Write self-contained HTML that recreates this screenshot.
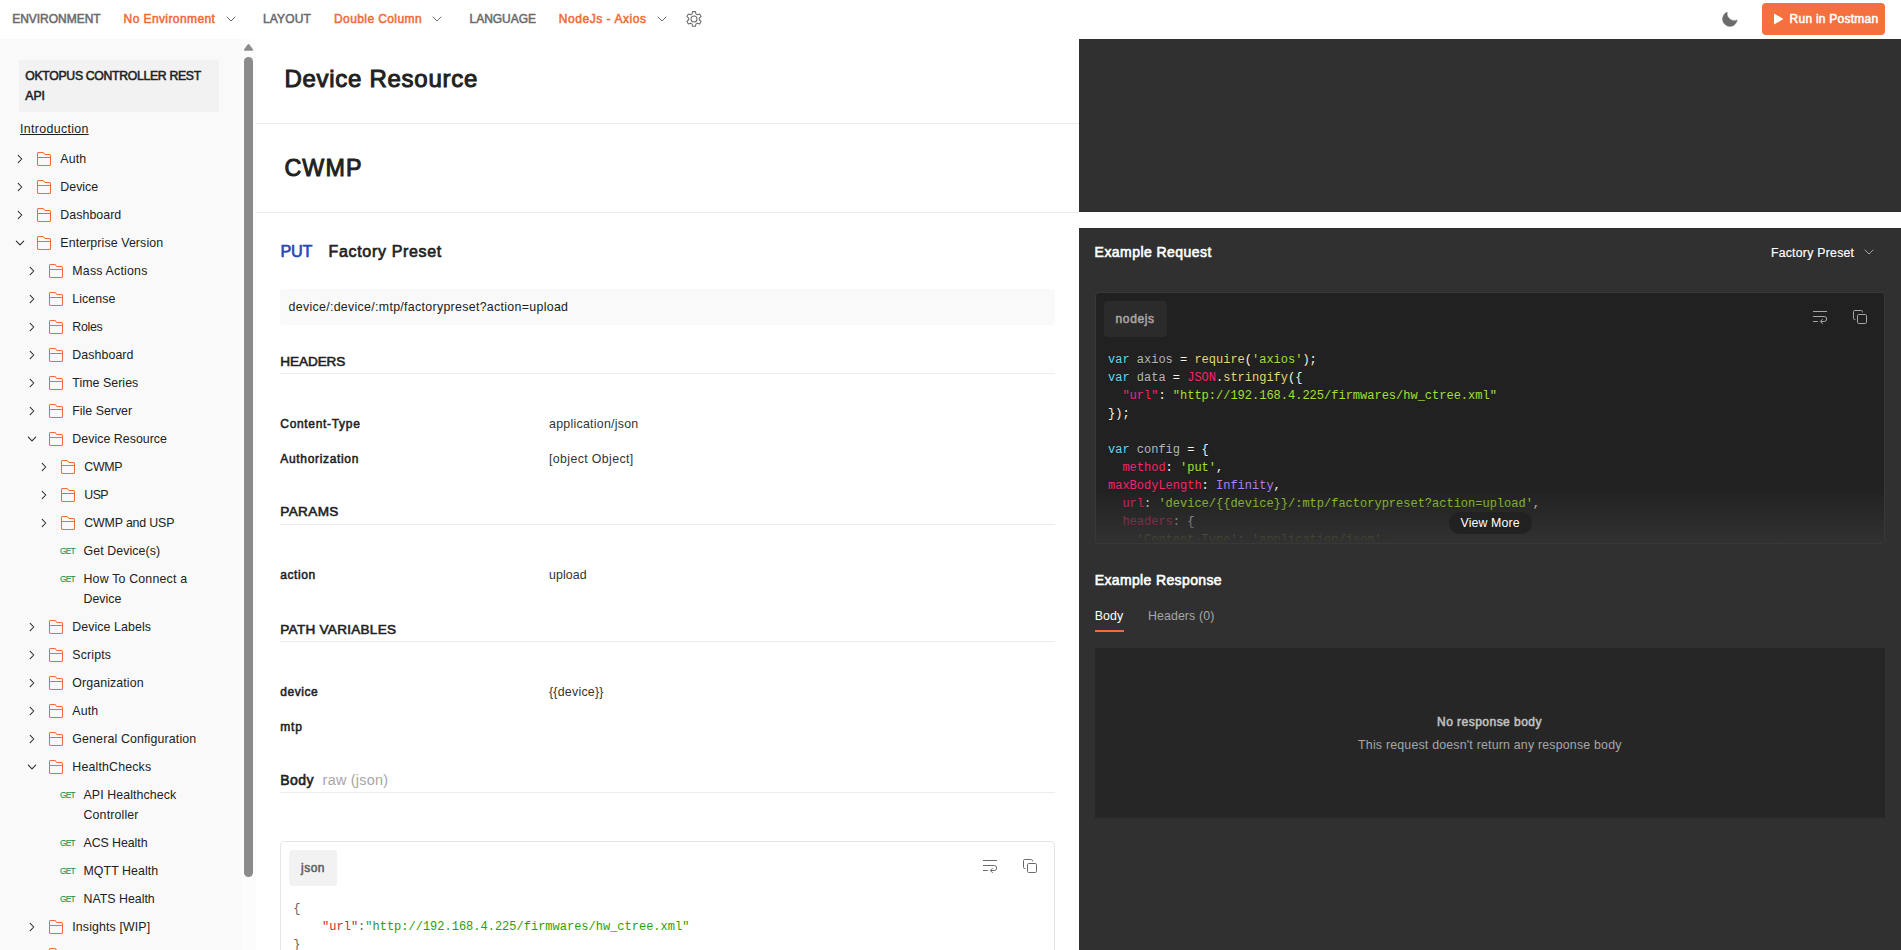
<!DOCTYPE html>
<html lang="en">
<head>
<meta charset="utf-8">
<title>Oktopus Controller REST API</title>
<style>
*{margin:0;padding:0;box-sizing:content-box}
html,body{width:1901px;height:950px;overflow:hidden;background:#fff}
body{position:relative;font-family:"Liberation Sans", Arial, sans-serif;font-size:12px;color:#212121}
.a,.t,.sec{position:absolute}
.t{white-space:pre;font-weight:400}
.b{font-weight:700}
.m{font-family:"Liberation Mono", "Courier New", monospace;font-size:12px}
.cs{text-shadow:0 1px rgba(0,0,0,.3)}
svg{display:block;overflow:visible}
</style>
</head>
<body>
<header class="sec top" style="left:0;top:0;width:1901px;height:39px;background:#fff;">
<span class="t" style="left:12.20px;top:10.00px;font-size:12.0px;line-height:18px;letter-spacing:-0.025px;color:#6b6b6b;-webkit-text-stroke:0.52px;">ENVIRONMENT</span>
<span class="t" style="left:123.60px;top:10.00px;font-size:12.0px;line-height:18px;letter-spacing:0.404px;color:#f26b3a;-webkit-text-stroke:0.52px;">No Environment</span>
<span class="t" style="left:263.00px;top:10.00px;font-size:12.0px;line-height:18px;letter-spacing:0.146px;color:#6b6b6b;-webkit-text-stroke:0.52px;">LAYOUT</span>
<span class="t" style="left:334.00px;top:10.00px;font-size:12.0px;line-height:18px;letter-spacing:0.406px;color:#f26b3a;-webkit-text-stroke:0.52px;">Double Column</span>
<span class="t" style="left:469.50px;top:10.00px;font-size:12.0px;line-height:18px;letter-spacing:-0.023px;color:#6b6b6b;-webkit-text-stroke:0.52px;">LANGUAGE</span>
<span class="t" style="left:558.75px;top:10.00px;font-size:12.0px;line-height:18px;letter-spacing:0.550px;color:#f26b3a;-webkit-text-stroke:0.52px;">NodeJs - Axios</span>
<svg class="a" style="left:223px;top:11px;" width="16" height="16" viewBox="0 0 16 16" fill="none"><path d="M4 6 L8 10 L12 6" stroke="#6b6b6b" stroke-width="1.0" stroke-linecap="round" stroke-linejoin="round"/></svg>
<svg class="a" style="left:429px;top:11px;" width="16" height="16" viewBox="0 0 16 16" fill="none"><path d="M4 6 L8 10 L12 6" stroke="#6b6b6b" stroke-width="1.0" stroke-linecap="round" stroke-linejoin="round"/></svg>
<svg class="a" style="left:654px;top:11px;" width="16" height="16" viewBox="0 0 16 16" fill="none"><path d="M4 6 L8 10 L12 6" stroke="#6b6b6b" stroke-width="1.0" stroke-linecap="round" stroke-linejoin="round"/></svg>
<svg class="a" style="left:686px;top:11px;" width="16" height="16" viewBox="0 0 16 16" fill="none"><path d="M6.05 2.97L6.50 0.60L9.50 0.60L9.95 2.97A5.35 5.35 0 0 1 11.34 3.77L13.61 2.98L15.11 5.57L13.29 7.15A5.35 5.35 0 0 1 13.29 8.75L15.11 10.33L13.61 12.92L11.34 12.13A5.35 5.35 0 0 1 9.95 12.93L9.50 15.30L6.50 15.30L6.05 12.93A5.35 5.35 0 0 1 4.66 12.13L2.39 12.92L0.89 10.33L2.71 8.75A5.35 5.35 0 0 1 2.71 7.15L0.89 5.57L2.39 2.98L4.66 3.77A5.35 5.35 0 0 1 6.05 2.97Z" stroke="#6b6b6b" stroke-width="1.05" stroke-linejoin="round"/><circle cx="8" cy="7.95" r="3" stroke="#6b6b6b" stroke-width="1.05"/></svg>
<svg class="a" style="left:1721px;top:11px;" width="17" height="16" viewBox="0 0 17 16" fill="none"><path d="M6.2 1.1 A7.4 7.4 0 1 0 16.25 8.9 A7.15 7.15 0 0 1 6.2 1.1Z" fill="#6b6b6b" stroke="#6b6b6b" stroke-width="0.4" stroke-linejoin="round"/></svg>
<div class="a" style="left:1762px;top:3px;width:123px;height:32px;background:#f4703f;border-radius:4px;"></div>
<svg class="a" style="left:1773px;top:13px;" width="11" height="12" viewBox="0 0 11 12" fill="none"><path d="M1 0.4 L10.4 6 L1 11.6Z" fill="#fff"/></svg>
<span class="t" style="left:1789.60px;top:10.00px;font-size:12.0px;line-height:18px;letter-spacing:0.244px;color:#fff;-webkit-text-stroke:0.52px;">Run in Postman</span>
</header>
<nav class="sec side" style="left:0;top:39px;width:241px;height:911px;background:#f9f9f9;overflow:hidden;">
<div class="a" style="left:19px;top:21px;width:200px;height:52px;background:#f2f2f2;"></div>
<span class="t" style="left:25.30px;top:28.00px;font-size:12.24px;line-height:18px;letter-spacing:-0.307px;color:#212121;-webkit-text-stroke:0.53px;">OKTOPUS CONTROLLER REST</span>
<span class="t" style="left:25.30px;top:48.00px;font-size:12.24px;line-height:18px;letter-spacing:-0.078px;color:#212121;-webkit-text-stroke:0.53px;">API</span>
<span class="t" style="left:20.10px;top:81.00px;font-size:12.36px;line-height:18px;letter-spacing:0.334px;color:#212121;text-decoration:underline;text-underline-offset:0.5px;">Introduction</span>
<svg class="a" style="left:12.2px;top:112px;" width="16" height="16" viewBox="0 0 16 16" fill="none"><path d="M6.2 4.4 L9.8 8 L6.2 11.6" stroke="#2b2b2b" stroke-width="1.05" stroke-linecap="round" stroke-linejoin="round"/></svg>
<svg class="a" style="left:36px;top:112px;" width="16" height="16" viewBox="0 0 16 16" fill="none"><path d="M2.5 1.5H7L9 3.5H13.5a1 1 0 0 1 1 1V13.5a1 1 0 0 1-1 1H2.5a1 1 0 0 1-1-1V2.5a1 1 0 0 1 1-1ZM1.5 6.5H14.5" stroke="#f26b3a" stroke-width="1.02" stroke-linejoin="round"/></svg>
<span class="t" style="left:60.30px;top:111.00px;font-size:12.36px;line-height:18px;letter-spacing:0.116px;color:#212121;">Auth</span>
<svg class="a" style="left:12.2px;top:140px;" width="16" height="16" viewBox="0 0 16 16" fill="none"><path d="M6.2 4.4 L9.8 8 L6.2 11.6" stroke="#2b2b2b" stroke-width="1.05" stroke-linecap="round" stroke-linejoin="round"/></svg>
<svg class="a" style="left:36px;top:140px;" width="16" height="16" viewBox="0 0 16 16" fill="none"><path d="M2.5 1.5H7L9 3.5H13.5a1 1 0 0 1 1 1V13.5a1 1 0 0 1-1 1H2.5a1 1 0 0 1-1-1V2.5a1 1 0 0 1 1-1ZM1.5 6.5H14.5" stroke="#f26b3a" stroke-width="1.02" stroke-linejoin="round"/></svg>
<span class="t" style="left:60.30px;top:139.00px;font-size:12.36px;line-height:18px;letter-spacing:0.020px;color:#212121;">Device</span>
<svg class="a" style="left:12.2px;top:168px;" width="16" height="16" viewBox="0 0 16 16" fill="none"><path d="M6.2 4.4 L9.8 8 L6.2 11.6" stroke="#2b2b2b" stroke-width="1.05" stroke-linecap="round" stroke-linejoin="round"/></svg>
<svg class="a" style="left:36px;top:168px;" width="16" height="16" viewBox="0 0 16 16" fill="none"><path d="M2.5 1.5H7L9 3.5H13.5a1 1 0 0 1 1 1V13.5a1 1 0 0 1-1 1H2.5a1 1 0 0 1-1-1V2.5a1 1 0 0 1 1-1ZM1.5 6.5H14.5" stroke="#f26b3a" stroke-width="1.02" stroke-linejoin="round"/></svg>
<span class="t" style="left:60.30px;top:167.00px;font-size:12.36px;line-height:18px;letter-spacing:0.059px;color:#212121;">Dashboard</span>
<svg class="a" style="left:12px;top:196px;" width="16" height="16" viewBox="0 0 16 16" fill="none"><path d="M4.3 6.1 L8 9.9 L11.7 6.1" stroke="#2b2b2b" stroke-width="1.05" stroke-linecap="round" stroke-linejoin="round"/></svg>
<svg class="a" style="left:36px;top:196px;" width="16" height="16" viewBox="0 0 16 16" fill="none"><path d="M2.5 1.5H7L9 3.5H13.5a1 1 0 0 1 1 1V13.5a1 1 0 0 1-1 1H2.5a1 1 0 0 1-1-1V2.5a1 1 0 0 1 1-1ZM1.5 6.5H14.5" stroke="#f26b3a" stroke-width="1.02" stroke-linejoin="round"/></svg>
<span class="t" style="left:60.30px;top:195.00px;font-size:12.36px;line-height:18px;letter-spacing:0.106px;color:#212121;">Enterprise Version</span>
<svg class="a" style="left:24.200000000000003px;top:224px;" width="16" height="16" viewBox="0 0 16 16" fill="none"><path d="M6.2 4.4 L9.8 8 L6.2 11.6" stroke="#2b2b2b" stroke-width="1.05" stroke-linecap="round" stroke-linejoin="round"/></svg>
<svg class="a" style="left:48px;top:224px;" width="16" height="16" viewBox="0 0 16 16" fill="none"><path d="M2.5 1.5H7L9 3.5H13.5a1 1 0 0 1 1 1V13.5a1 1 0 0 1-1 1H2.5a1 1 0 0 1-1-1V2.5a1 1 0 0 1 1-1ZM1.5 6.5H14.5" stroke="#f26b3a" stroke-width="1.02" stroke-linejoin="round"/></svg>
<span class="t" style="left:72.30px;top:223.00px;font-size:12.36px;line-height:18px;letter-spacing:0.207px;color:#212121;">Mass Actions</span>
<svg class="a" style="left:24.200000000000003px;top:252px;" width="16" height="16" viewBox="0 0 16 16" fill="none"><path d="M6.2 4.4 L9.8 8 L6.2 11.6" stroke="#2b2b2b" stroke-width="1.05" stroke-linecap="round" stroke-linejoin="round"/></svg>
<svg class="a" style="left:48px;top:252px;" width="16" height="16" viewBox="0 0 16 16" fill="none"><path d="M2.5 1.5H7L9 3.5H13.5a1 1 0 0 1 1 1V13.5a1 1 0 0 1-1 1H2.5a1 1 0 0 1-1-1V2.5a1 1 0 0 1 1-1ZM1.5 6.5H14.5" stroke="#f26b3a" stroke-width="1.02" stroke-linejoin="round"/></svg>
<span class="t" style="left:72.30px;top:251.00px;font-size:12.36px;line-height:18px;letter-spacing:0.070px;color:#212121;">License</span>
<svg class="a" style="left:24.200000000000003px;top:280px;" width="16" height="16" viewBox="0 0 16 16" fill="none"><path d="M6.2 4.4 L9.8 8 L6.2 11.6" stroke="#2b2b2b" stroke-width="1.05" stroke-linecap="round" stroke-linejoin="round"/></svg>
<svg class="a" style="left:48px;top:280px;" width="16" height="16" viewBox="0 0 16 16" fill="none"><path d="M2.5 1.5H7L9 3.5H13.5a1 1 0 0 1 1 1V13.5a1 1 0 0 1-1 1H2.5a1 1 0 0 1-1-1V2.5a1 1 0 0 1 1-1ZM1.5 6.5H14.5" stroke="#f26b3a" stroke-width="1.02" stroke-linejoin="round"/></svg>
<span class="t" style="left:72.30px;top:279.00px;font-size:12.36px;line-height:18px;letter-spacing:-0.302px;color:#212121;">Roles</span>
<svg class="a" style="left:24.200000000000003px;top:308px;" width="16" height="16" viewBox="0 0 16 16" fill="none"><path d="M6.2 4.4 L9.8 8 L6.2 11.6" stroke="#2b2b2b" stroke-width="1.05" stroke-linecap="round" stroke-linejoin="round"/></svg>
<svg class="a" style="left:48px;top:308px;" width="16" height="16" viewBox="0 0 16 16" fill="none"><path d="M2.5 1.5H7L9 3.5H13.5a1 1 0 0 1 1 1V13.5a1 1 0 0 1-1 1H2.5a1 1 0 0 1-1-1V2.5a1 1 0 0 1 1-1ZM1.5 6.5H14.5" stroke="#f26b3a" stroke-width="1.02" stroke-linejoin="round"/></svg>
<span class="t" style="left:72.30px;top:307.00px;font-size:12.36px;line-height:18px;letter-spacing:0.081px;color:#212121;">Dashboard</span>
<svg class="a" style="left:24.200000000000003px;top:336px;" width="16" height="16" viewBox="0 0 16 16" fill="none"><path d="M6.2 4.4 L9.8 8 L6.2 11.6" stroke="#2b2b2b" stroke-width="1.05" stroke-linecap="round" stroke-linejoin="round"/></svg>
<svg class="a" style="left:48px;top:336px;" width="16" height="16" viewBox="0 0 16 16" fill="none"><path d="M2.5 1.5H7L9 3.5H13.5a1 1 0 0 1 1 1V13.5a1 1 0 0 1-1 1H2.5a1 1 0 0 1-1-1V2.5a1 1 0 0 1 1-1ZM1.5 6.5H14.5" stroke="#f26b3a" stroke-width="1.02" stroke-linejoin="round"/></svg>
<span class="t" style="left:72.30px;top:335.00px;font-size:12.36px;line-height:18px;letter-spacing:0.047px;color:#212121;">Time Series</span>
<svg class="a" style="left:24.200000000000003px;top:364px;" width="16" height="16" viewBox="0 0 16 16" fill="none"><path d="M6.2 4.4 L9.8 8 L6.2 11.6" stroke="#2b2b2b" stroke-width="1.05" stroke-linecap="round" stroke-linejoin="round"/></svg>
<svg class="a" style="left:48px;top:364px;" width="16" height="16" viewBox="0 0 16 16" fill="none"><path d="M2.5 1.5H7L9 3.5H13.5a1 1 0 0 1 1 1V13.5a1 1 0 0 1-1 1H2.5a1 1 0 0 1-1-1V2.5a1 1 0 0 1 1-1ZM1.5 6.5H14.5" stroke="#f26b3a" stroke-width="1.02" stroke-linejoin="round"/></svg>
<span class="t" style="left:72.30px;top:363.00px;font-size:12.36px;line-height:18px;letter-spacing:0.003px;color:#212121;">File Server</span>
<svg class="a" style="left:24px;top:392px;" width="16" height="16" viewBox="0 0 16 16" fill="none"><path d="M4.3 6.1 L8 9.9 L11.7 6.1" stroke="#2b2b2b" stroke-width="1.05" stroke-linecap="round" stroke-linejoin="round"/></svg>
<svg class="a" style="left:48px;top:392px;" width="16" height="16" viewBox="0 0 16 16" fill="none"><path d="M2.5 1.5H7L9 3.5H13.5a1 1 0 0 1 1 1V13.5a1 1 0 0 1-1 1H2.5a1 1 0 0 1-1-1V2.5a1 1 0 0 1 1-1ZM1.5 6.5H14.5" stroke="#f26b3a" stroke-width="1.02" stroke-linejoin="round"/></svg>
<span class="t" style="left:72.30px;top:391.00px;font-size:12.36px;line-height:18px;letter-spacing:0.039px;color:#212121;">Device Resource</span>
<svg class="a" style="left:36.2px;top:420px;" width="16" height="16" viewBox="0 0 16 16" fill="none"><path d="M6.2 4.4 L9.8 8 L6.2 11.6" stroke="#2b2b2b" stroke-width="1.05" stroke-linecap="round" stroke-linejoin="round"/></svg>
<svg class="a" style="left:60px;top:420px;" width="16" height="16" viewBox="0 0 16 16" fill="none"><path d="M2.5 1.5H7L9 3.5H13.5a1 1 0 0 1 1 1V13.5a1 1 0 0 1-1 1H2.5a1 1 0 0 1-1-1V2.5a1 1 0 0 1 1-1ZM1.5 6.5H14.5" stroke="#f26b3a" stroke-width="1.02" stroke-linejoin="round"/></svg>
<span class="t" style="left:84.30px;top:419.00px;font-size:12.36px;line-height:18px;letter-spacing:-0.335px;color:#212121;">CWMP</span>
<svg class="a" style="left:36.2px;top:448px;" width="16" height="16" viewBox="0 0 16 16" fill="none"><path d="M6.2 4.4 L9.8 8 L6.2 11.6" stroke="#2b2b2b" stroke-width="1.05" stroke-linecap="round" stroke-linejoin="round"/></svg>
<svg class="a" style="left:60px;top:448px;" width="16" height="16" viewBox="0 0 16 16" fill="none"><path d="M2.5 1.5H7L9 3.5H13.5a1 1 0 0 1 1 1V13.5a1 1 0 0 1-1 1H2.5a1 1 0 0 1-1-1V2.5a1 1 0 0 1 1-1ZM1.5 6.5H14.5" stroke="#f26b3a" stroke-width="1.02" stroke-linejoin="round"/></svg>
<span class="t" style="left:84.30px;top:447.00px;font-size:12.36px;line-height:18px;letter-spacing:-0.574px;color:#212121;">USP</span>
<svg class="a" style="left:36.2px;top:476px;" width="16" height="16" viewBox="0 0 16 16" fill="none"><path d="M6.2 4.4 L9.8 8 L6.2 11.6" stroke="#2b2b2b" stroke-width="1.05" stroke-linecap="round" stroke-linejoin="round"/></svg>
<svg class="a" style="left:60px;top:476px;" width="16" height="16" viewBox="0 0 16 16" fill="none"><path d="M2.5 1.5H7L9 3.5H13.5a1 1 0 0 1 1 1V13.5a1 1 0 0 1-1 1H2.5a1 1 0 0 1-1-1V2.5a1 1 0 0 1 1-1ZM1.5 6.5H14.5" stroke="#f26b3a" stroke-width="1.02" stroke-linejoin="round"/></svg>
<span class="t" style="left:84.30px;top:475.00px;font-size:12.36px;line-height:18px;letter-spacing:-0.151px;color:#212121;">CWMP and USP</span>
<span class="t" style="left:60.00px;top:506.00px;font-size:8.3px;line-height:12px;letter-spacing:-0.721px;color:#16924a;-webkit-text-stroke:0.12px;">GET</span>
<span class="t" style="left:83.50px;top:503.00px;font-size:12.36px;line-height:18px;letter-spacing:0.081px;color:#212121;">Get Device(s)</span>
<span class="t" style="left:60.00px;top:534.00px;font-size:8.3px;line-height:12px;letter-spacing:-0.721px;color:#16924a;-webkit-text-stroke:0.12px;">GET</span>
<span class="t" style="left:83.50px;top:531.00px;font-size:12.36px;line-height:18px;letter-spacing:0.183px;color:#212121;">How To Connect a</span>
<span class="t" style="left:83.50px;top:551.00px;font-size:12.36px;line-height:18px;letter-spacing:0.036px;color:#212121;">Device</span>
<svg class="a" style="left:24.200000000000003px;top:580px;" width="16" height="16" viewBox="0 0 16 16" fill="none"><path d="M6.2 4.4 L9.8 8 L6.2 11.6" stroke="#2b2b2b" stroke-width="1.05" stroke-linecap="round" stroke-linejoin="round"/></svg>
<svg class="a" style="left:48px;top:580px;" width="16" height="16" viewBox="0 0 16 16" fill="none"><path d="M2.5 1.5H7L9 3.5H13.5a1 1 0 0 1 1 1V13.5a1 1 0 0 1-1 1H2.5a1 1 0 0 1-1-1V2.5a1 1 0 0 1 1-1ZM1.5 6.5H14.5" stroke="#f26b3a" stroke-width="1.02" stroke-linejoin="round"/></svg>
<span class="t" style="left:72.30px;top:579.00px;font-size:12.36px;line-height:18px;letter-spacing:0.081px;color:#212121;">Device Labels</span>
<svg class="a" style="left:24.200000000000003px;top:608px;" width="16" height="16" viewBox="0 0 16 16" fill="none"><path d="M6.2 4.4 L9.8 8 L6.2 11.6" stroke="#2b2b2b" stroke-width="1.05" stroke-linecap="round" stroke-linejoin="round"/></svg>
<svg class="a" style="left:48px;top:608px;" width="16" height="16" viewBox="0 0 16 16" fill="none"><path d="M2.5 1.5H7L9 3.5H13.5a1 1 0 0 1 1 1V13.5a1 1 0 0 1-1 1H2.5a1 1 0 0 1-1-1V2.5a1 1 0 0 1 1-1ZM1.5 6.5H14.5" stroke="#f26b3a" stroke-width="1.02" stroke-linejoin="round"/></svg>
<span class="t" style="left:72.30px;top:607.00px;font-size:12.36px;line-height:18px;letter-spacing:0.160px;color:#212121;">Scripts</span>
<svg class="a" style="left:24.200000000000003px;top:636px;" width="16" height="16" viewBox="0 0 16 16" fill="none"><path d="M6.2 4.4 L9.8 8 L6.2 11.6" stroke="#2b2b2b" stroke-width="1.05" stroke-linecap="round" stroke-linejoin="round"/></svg>
<svg class="a" style="left:48px;top:636px;" width="16" height="16" viewBox="0 0 16 16" fill="none"><path d="M2.5 1.5H7L9 3.5H13.5a1 1 0 0 1 1 1V13.5a1 1 0 0 1-1 1H2.5a1 1 0 0 1-1-1V2.5a1 1 0 0 1 1-1ZM1.5 6.5H14.5" stroke="#f26b3a" stroke-width="1.02" stroke-linejoin="round"/></svg>
<span class="t" style="left:72.30px;top:635.00px;font-size:12.36px;line-height:18px;letter-spacing:0.110px;color:#212121;">Organization</span>
<svg class="a" style="left:24.200000000000003px;top:664px;" width="16" height="16" viewBox="0 0 16 16" fill="none"><path d="M6.2 4.4 L9.8 8 L6.2 11.6" stroke="#2b2b2b" stroke-width="1.05" stroke-linecap="round" stroke-linejoin="round"/></svg>
<svg class="a" style="left:48px;top:664px;" width="16" height="16" viewBox="0 0 16 16" fill="none"><path d="M2.5 1.5H7L9 3.5H13.5a1 1 0 0 1 1 1V13.5a1 1 0 0 1-1 1H2.5a1 1 0 0 1-1-1V2.5a1 1 0 0 1 1-1ZM1.5 6.5H14.5" stroke="#f26b3a" stroke-width="1.02" stroke-linejoin="round"/></svg>
<span class="t" style="left:72.30px;top:663.00px;font-size:12.36px;line-height:18px;letter-spacing:0.141px;color:#212121;">Auth</span>
<svg class="a" style="left:24.200000000000003px;top:692px;" width="16" height="16" viewBox="0 0 16 16" fill="none"><path d="M6.2 4.4 L9.8 8 L6.2 11.6" stroke="#2b2b2b" stroke-width="1.05" stroke-linecap="round" stroke-linejoin="round"/></svg>
<svg class="a" style="left:48px;top:692px;" width="16" height="16" viewBox="0 0 16 16" fill="none"><path d="M2.5 1.5H7L9 3.5H13.5a1 1 0 0 1 1 1V13.5a1 1 0 0 1-1 1H2.5a1 1 0 0 1-1-1V2.5a1 1 0 0 1 1-1ZM1.5 6.5H14.5" stroke="#f26b3a" stroke-width="1.02" stroke-linejoin="round"/></svg>
<span class="t" style="left:72.30px;top:691.00px;font-size:12.36px;line-height:18px;letter-spacing:0.151px;color:#212121;">General Configuration</span>
<svg class="a" style="left:24px;top:720px;" width="16" height="16" viewBox="0 0 16 16" fill="none"><path d="M4.3 6.1 L8 9.9 L11.7 6.1" stroke="#2b2b2b" stroke-width="1.05" stroke-linecap="round" stroke-linejoin="round"/></svg>
<svg class="a" style="left:48px;top:720px;" width="16" height="16" viewBox="0 0 16 16" fill="none"><path d="M2.5 1.5H7L9 3.5H13.5a1 1 0 0 1 1 1V13.5a1 1 0 0 1-1 1H2.5a1 1 0 0 1-1-1V2.5a1 1 0 0 1 1-1ZM1.5 6.5H14.5" stroke="#f26b3a" stroke-width="1.02" stroke-linejoin="round"/></svg>
<span class="t" style="left:72.30px;top:719.00px;font-size:12.36px;line-height:18px;letter-spacing:0.171px;color:#212121;">HealthChecks</span>
<span class="t" style="left:60.00px;top:750.00px;font-size:8.3px;line-height:12px;letter-spacing:-0.721px;color:#16924a;-webkit-text-stroke:0.12px;">GET</span>
<span class="t" style="left:83.50px;top:747.00px;font-size:12.36px;line-height:18px;letter-spacing:0.088px;color:#212121;">API Healthcheck</span>
<span class="t" style="left:83.50px;top:767.00px;font-size:12.36px;line-height:18px;letter-spacing:0.152px;color:#212121;">Controller</span>
<span class="t" style="left:60.00px;top:798.00px;font-size:8.3px;line-height:12px;letter-spacing:-0.721px;color:#16924a;-webkit-text-stroke:0.12px;">GET</span>
<span class="t" style="left:83.50px;top:795.00px;font-size:12.36px;line-height:18px;letter-spacing:-0.058px;color:#212121;">ACS Health</span>
<span class="t" style="left:60.00px;top:826.00px;font-size:8.3px;line-height:12px;letter-spacing:-0.721px;color:#16924a;-webkit-text-stroke:0.12px;">GET</span>
<span class="t" style="left:83.50px;top:823.00px;font-size:12.36px;line-height:18px;letter-spacing:0.077px;color:#212121;">MQTT Health</span>
<span class="t" style="left:60.00px;top:854.00px;font-size:8.3px;line-height:12px;letter-spacing:-0.721px;color:#16924a;-webkit-text-stroke:0.12px;">GET</span>
<span class="t" style="left:83.50px;top:851.00px;font-size:12.36px;line-height:18px;letter-spacing:-0.002px;color:#212121;">NATS Health</span>
<svg class="a" style="left:24.200000000000003px;top:880px;" width="16" height="16" viewBox="0 0 16 16" fill="none"><path d="M6.2 4.4 L9.8 8 L6.2 11.6" stroke="#2b2b2b" stroke-width="1.05" stroke-linecap="round" stroke-linejoin="round"/></svg>
<svg class="a" style="left:48px;top:880px;" width="16" height="16" viewBox="0 0 16 16" fill="none"><path d="M2.5 1.5H7L9 3.5H13.5a1 1 0 0 1 1 1V13.5a1 1 0 0 1-1 1H2.5a1 1 0 0 1-1-1V2.5a1 1 0 0 1 1-1ZM1.5 6.5H14.5" stroke="#f26b3a" stroke-width="1.02" stroke-linejoin="round"/></svg>
<span class="t" style="left:72.30px;top:879.00px;font-size:12.36px;line-height:18px;letter-spacing:0.118px;color:#212121;">Insights [WIP]</span>
<svg class="a" style="left:24.200000000000003px;top:908px;" width="16" height="16" viewBox="0 0 16 16" fill="none"><path d="M6.2 4.4 L9.8 8 L6.2 11.6" stroke="#2b2b2b" stroke-width="1.05" stroke-linecap="round" stroke-linejoin="round"/></svg>
<svg class="a" style="left:48px;top:908px;" width="16" height="16" viewBox="0 0 16 16" fill="none"><path d="M2.5 1.5H7L9 3.5H13.5a1 1 0 0 1 1 1V13.5a1 1 0 0 1-1 1H2.5a1 1 0 0 1-1-1V2.5a1 1 0 0 1 1-1ZM1.5 6.5H14.5" stroke="#f26b3a" stroke-width="1.02" stroke-linejoin="round"/></svg>
<span class="t" style="left:72.30px;top:907.00px;font-size:12.36px;line-height:18px;letter-spacing:-0.188px;color:#212121;">Firmware</span>
</nav>
<div class="sec scroll" style="left:241px;top:39px;width:15px;height:911px;background:#fcfcfc;">
<svg class="a" style="left:2px;top:4px;" width="11" height="9" viewBox="0 0 11 9" fill="none"><path d="M5.5 2 L9 6.8 H2Z" fill="#8b8b8b" stroke="#8b8b8b" stroke-width="2.1" stroke-linejoin="round"/></svg>
<div class="a" style="left:3px;top:18px;width:9px;height:820px;background:#8b8b8b;border-radius:4.5px;"></div>
</div>
<main class="sec doc" style="left:256px;top:39px;width:823px;height:911px;background:#fff;overflow:hidden;">
<span class="t" style="left:28.40px;top:21.00px;font-size:24.0px;line-height:37px;letter-spacing:0.723px;color:#212121;-webkit-text-stroke:0.98px;">Device Resource</span>
<div class="a" style="left:0px;top:84px;width:823px;height:1px;background:#ededed;"></div>
<span class="t" style="left:28.40px;top:111.00px;font-size:23.28px;line-height:36px;letter-spacing:1.157px;color:#212121;-webkit-text-stroke:0.95px;">CWMP</span>
<div class="a" style="left:0px;top:173px;width:823px;height:1px;background:#ededed;"></div>
<span class="t" style="left:24.50px;top:200.00px;font-size:16.2px;line-height:24px;letter-spacing:-0.258px;color:#1f48b8;-webkit-text-stroke:0.66px;">PUT</span>
<span class="t" style="left:72.50px;top:200.00px;font-size:16.0px;line-height:25px;letter-spacing:0.676px;color:#212121;-webkit-text-stroke:0.66px;">Factory Preset</span>
<div class="a" style="left:24px;top:250px;width:775px;height:36px;background:#f9f9f9;border-radius:4px;"></div>
<span class="t" style="left:32.50px;top:259.00px;font-size:12.36px;line-height:18px;letter-spacing:0.318px;color:#212121;">device/:device/:mtp/factorypreset?action=upload</span>
<span class="t" style="left:24.30px;top:312.00px;font-size:13.58px;line-height:21px;letter-spacing:-0.094px;color:#212121;-webkit-text-stroke:0.58px;">HEADERS</span>
<div class="a" style="left:24px;top:334px;width:775px;height:1px;background:#ededed;"></div>
<span class="t" style="left:24.30px;top:376.00px;font-size:12.0px;line-height:18px;letter-spacing:0.679px;color:#212121;-webkit-text-stroke:0.52px;">Content-Type</span>
<span class="t" style="left:293.00px;top:376.00px;font-size:12.36px;line-height:18px;letter-spacing:0.269px;color:#333;">application/json</span>
<span class="t" style="left:24.30px;top:411.00px;font-size:12.0px;line-height:18px;letter-spacing:0.666px;color:#212121;-webkit-text-stroke:0.52px;">Authorization</span>
<span class="t" style="left:293.00px;top:411.00px;font-size:12.36px;line-height:18px;letter-spacing:0.372px;color:#333;">[object Object]</span>
<span class="t" style="left:24.30px;top:462.00px;font-size:13.58px;line-height:21px;letter-spacing:0.359px;color:#212121;-webkit-text-stroke:0.58px;">PARAMS</span>
<div class="a" style="left:24px;top:485px;width:775px;height:1px;background:#ededed;"></div>
<span class="t" style="left:24.30px;top:527.00px;font-size:12.0px;line-height:18px;letter-spacing:0.561px;color:#212121;-webkit-text-stroke:0.52px;">action</span>
<span class="t" style="left:293.00px;top:527.00px;font-size:12.36px;line-height:18px;letter-spacing:0.112px;color:#333;">upload</span>
<span class="t" style="left:24.30px;top:580.00px;font-size:13.58px;line-height:21px;letter-spacing:0.254px;color:#212121;-webkit-text-stroke:0.58px;">PATH VARIABLES</span>
<div class="a" style="left:24px;top:602px;width:775px;height:1px;background:#ededed;"></div>
<span class="t" style="left:24.30px;top:644.00px;font-size:12.0px;line-height:18px;letter-spacing:0.552px;color:#212121;-webkit-text-stroke:0.52px;">device</span>
<span class="t" style="left:293.00px;top:644.00px;font-size:12.36px;line-height:18px;letter-spacing:0.245px;color:#333;">{{device}}</span>
<span class="t" style="left:24.30px;top:679.00px;font-size:12.0px;line-height:18px;letter-spacing:0.761px;color:#212121;-webkit-text-stroke:0.52px;">mtp</span>
<span class="t" style="left:24.30px;top:730.00px;font-size:14.0px;line-height:22px;letter-spacing:0.395px;color:#212121;-webkit-text-stroke:0.60px;">Body</span>
<span class="t" style="left:66.60px;top:730.00px;font-size:14.42px;line-height:22px;letter-spacing:0.245px;color:#a6a6a6;">raw (json)</span>
<div class="a" style="left:24px;top:753px;width:775px;height:1px;background:#ededed;"></div>
<div class="a" style="left:24px;top:802px;width:775px;height:140px;border:1px solid #e6e6e6;border-radius:4px;box-sizing:border-box;"></div>
<div class="a" style="left:33px;top:811px;width:48px;height:36px;background:#f2f2f2;border-radius:4px;"></div>
<span class="t" style="left:45.00px;top:820.00px;font-size:12.0px;line-height:18px;letter-spacing:0.496px;color:#5e5e5e;-webkit-text-stroke:0.52px;">json</span>
<svg class="a" style="left:726px;top:819px;" width="16" height="16" viewBox="0 0 16 16" fill="none"><path d="M1 2.5H15M1 7.5H12.2a2.5 2.5 0 0 1 0 5H8.6M1 12.5H5.8" stroke="#6b6b6b" stroke-width="1"/><path d="M10.5 10.3L8.3 12.5L10.5 14.7" stroke="#6b6b6b" stroke-width="1" stroke-linecap="round" stroke-linejoin="round"/></svg>
<svg class="a" style="left:766px;top:819px;" width="16" height="16" viewBox="0 0 16 16" fill="none"><rect x="5.5" y="5.5" width="9" height="9" rx="1.2" stroke="#6b6b6b" stroke-width="1"/><path d="M3 10.5H2.7a1.2 1.2 0 0 1-1.2-1.2V2.7a1.2 1.2 0 0 1 1.2-1.2H9.3a1.2 1.2 0 0 1 1.2 1.2V3" stroke="#6b6b6b" stroke-width="1" stroke-linecap="round"/></svg>
<span class="t m" style="left:37.30px;top:861.00px;font-size:12px;line-height:18px;color:#5f6364;">{</span>
<span class="t m" style="left:66.10px;top:879.00px;font-size:12px;line-height:18px;color:#c92c2c;">"url"</span>
<span class="t m" style="left:102.10px;top:879.00px;font-size:12px;line-height:18px;color:#5f6364;">:</span>
<span class="t m" style="left:109.30px;top:879.00px;font-size:12px;line-height:18px;color:#2f9c0a;">"http://192.168.4.225/firmwares/hw_ctree.xml"</span>
<span class="t m" style="left:37.30px;top:897.00px;font-size:12px;line-height:18px;color:#5f6364;">}</span>
</main>
<aside class="sec ex" style="left:1079px;top:39px;width:822px;height:911px;background:#303030;overflow:hidden;">
<div class="a" style="left:0px;top:172.5px;width:822px;height:16.5px;background:#fff;"></div>
<span class="t" style="left:15.60px;top:202.00px;font-size:14.0px;line-height:22px;letter-spacing:0.446px;color:#fff;-webkit-text-stroke:0.60px;">Example Request</span>
<span class="t" style="left:691.90px;top:205.00px;font-size:12.24px;line-height:18px;letter-spacing:0.274px;color:#fff;-webkit-text-stroke:0.18px;">Factory Preset</span>
<svg class="a" style="left:782px;top:205.3px;" width="16" height="16" viewBox="0 0 16 16" fill="none"><path d="M4 6 L8 10 L12 6" stroke="#a6a6a6" stroke-width="1.0" stroke-linecap="round" stroke-linejoin="round"/></svg>
<div class="sec code" style="left:17px;top:254px;width:788px;height:250px;background:#212121;box-shadow:0 0 0 1px #383838;border-radius:3px;overflow:hidden;">
<div class="a" style="left:8px;top:8px;width:63px;height:36px;background:#2b2b2b;border-radius:4px;"></div>
<span class="t" style="left:19.60px;top:17.00px;font-size:12.0px;line-height:18px;letter-spacing:0.604px;color:#a6a6a6;-webkit-text-stroke:0.52px;">nodejs</span>
<svg class="a" style="left:716px;top:16px;" width="16" height="16" viewBox="0 0 16 16" fill="none"><path d="M1 2.5H15M1 7.5H12.2a2.5 2.5 0 0 1 0 5H8.6M1 12.5H5.8" stroke="#a6a6a6" stroke-width="1"/><path d="M10.5 10.3L8.3 12.5L10.5 14.7" stroke="#a6a6a6" stroke-width="1" stroke-linecap="round" stroke-linejoin="round"/></svg>
<svg class="a" style="left:756px;top:16px;" width="16" height="16" viewBox="0 0 16 16" fill="none"><rect x="5.5" y="5.5" width="9" height="9" rx="1.2" stroke="#a6a6a6" stroke-width="1"/><path d="M3 10.5H2.7a1.2 1.2 0 0 1-1.2-1.2V2.7a1.2 1.2 0 0 1 1.2-1.2H9.3a1.2 1.2 0 0 1 1.2 1.2V3" stroke="#a6a6a6" stroke-width="1" stroke-linecap="round"/></svg>
<span class="t m cs" style="left:12.00px;top:58.00px;font-size:12px;line-height:18px;color:#66d9ef;">var</span>
<span class="t m cs" style="left:40.80px;top:58.00px;font-size:12px;line-height:18px;color:#b8b8b8;">axios</span>
<span class="t m cs" style="left:84.00px;top:58.00px;font-size:12px;line-height:18px;color:#f8f8f2;">=</span>
<span class="t m cs" style="left:98.40px;top:58.00px;font-size:12px;line-height:18px;color:#e6db74;">require</span>
<span class="t m cs" style="left:148.80px;top:58.00px;font-size:12px;line-height:18px;color:#f8f8f2;">(</span>
<span class="t m cs" style="left:156.00px;top:58.00px;font-size:12px;line-height:18px;color:#a6e22e;">'axios'</span>
<span class="t m cs" style="left:206.40px;top:58.00px;font-size:12px;line-height:18px;color:#f8f8f2;">);</span>
<span class="t m cs" style="left:12.00px;top:76.00px;font-size:12px;line-height:18px;color:#66d9ef;">var</span>
<span class="t m cs" style="left:40.80px;top:76.00px;font-size:12px;line-height:18px;color:#b8b8b8;">data</span>
<span class="t m cs" style="left:76.80px;top:76.00px;font-size:12px;line-height:18px;color:#f8f8f2;">=</span>
<span class="t m cs" style="left:91.20px;top:76.00px;font-size:12px;line-height:18px;color:#f92672;">JSON</span>
<span class="t m cs" style="left:120.00px;top:76.00px;font-size:12px;line-height:18px;color:#f8f8f2;">.</span>
<span class="t m cs" style="left:127.20px;top:76.00px;font-size:12px;line-height:18px;color:#e6db74;">stringify</span>
<span class="t m cs" style="left:192.00px;top:76.00px;font-size:12px;line-height:18px;color:#f8f8f2;">({</span>
<span class="t m cs" style="left:26.40px;top:94.00px;font-size:12px;line-height:18px;color:#f92672;">"url"</span>
<span class="t m cs" style="left:62.40px;top:94.00px;font-size:12px;line-height:18px;color:#f8f8f2;">:</span>
<span class="t m cs" style="left:76.80px;top:94.00px;font-size:12px;line-height:18px;color:#a6e22e;">"http://192.168.4.225/firmwares/hw_ctree.xml"</span>
<span class="t m cs" style="left:12.00px;top:112.00px;font-size:12px;line-height:18px;color:#f8f8f2;">});</span>
<span class="t m cs" style="left:12.00px;top:148.00px;font-size:12px;line-height:18px;color:#66d9ef;">var</span>
<span class="t m cs" style="left:40.80px;top:148.00px;font-size:12px;line-height:18px;color:#b8b8b8;">config</span>
<span class="t m cs" style="left:91.20px;top:148.00px;font-size:12px;line-height:18px;color:#f8f8f2;">=</span>
<span class="t m cs" style="left:105.60px;top:148.00px;font-size:12px;line-height:18px;color:#f8f8f2;">{</span>
<span class="t m cs" style="left:26.40px;top:166.00px;font-size:12px;line-height:18px;color:#f92672;">method</span>
<span class="t m cs" style="left:69.60px;top:166.00px;font-size:12px;line-height:18px;color:#f8f8f2;">:</span>
<span class="t m cs" style="left:84.00px;top:166.00px;font-size:12px;line-height:18px;color:#a6e22e;">'put'</span>
<span class="t m cs" style="left:120.00px;top:166.00px;font-size:12px;line-height:18px;color:#f8f8f2;">,</span>
<span class="t m cs" style="left:12.00px;top:184.00px;font-size:12px;line-height:18px;color:#f92672;">maxBodyLength</span>
<span class="t m cs" style="left:105.60px;top:184.00px;font-size:12px;line-height:18px;color:#f8f8f2;">:</span>
<span class="t m cs" style="left:120.00px;top:184.00px;font-size:12px;line-height:18px;color:#ae81ff;">Infinity</span>
<span class="t m cs" style="left:177.60px;top:184.00px;font-size:12px;line-height:18px;color:#f8f8f2;">,</span>
<span class="t m cs" style="left:26.40px;top:202.00px;font-size:12px;line-height:18px;color:#f92672;">url</span>
<span class="t m cs" style="left:48.00px;top:202.00px;font-size:12px;line-height:18px;color:#f8f8f2;">:</span>
<span class="t m cs" style="left:62.40px;top:202.00px;font-size:12px;line-height:18px;color:#a6e22e;">'device/{{device}}/:mtp/factorypreset?action=upload'</span>
<span class="t m cs" style="left:436.80px;top:202.00px;font-size:12px;line-height:18px;color:#f8f8f2;">,</span>
<span class="t m cs" style="left:26.40px;top:220.00px;font-size:12px;line-height:18px;color:#f92672;">headers</span>
<span class="t m cs" style="left:76.80px;top:220.00px;font-size:12px;line-height:18px;color:#f8f8f2;">:</span>
<span class="t m cs" style="left:91.20px;top:220.00px;font-size:12px;line-height:18px;color:#f8f8f2;">{</span>
<span class="t m cs" style="left:40.80px;top:238.00px;font-size:12px;line-height:18px;color:#a6e22e;">'Content-Type'</span>
<span class="t m cs" style="left:141.60px;top:238.00px;font-size:12px;line-height:18px;color:#f8f8f2;">:</span>
<span class="t m cs" style="left:156.00px;top:238.00px;font-size:12px;line-height:18px;color:#a6e22e;">'application/json'</span>
<span class="t m cs" style="left:285.60px;top:238.00px;font-size:12px;line-height:18px;color:#f8f8f2;">,</span>
<div class="a" style="left:0px;top:195px;width:788px;height:55px;background:linear-gradient(to bottom, rgba(49,49,49,0) 0%, rgba(49,49,49,1) 100%);"></div>
<div class="a" style="left:353px;top:218.5px;width:82.5px;height:22px;background:#212121;border-radius:11px;"></div>
<span class="t" style="left:364.50px;top:221.00px;font-size:12.36px;line-height:18px;letter-spacing:0.114px;color:#fff;">View More</span>
</div>
<span class="t" style="left:15.70px;top:530.00px;font-size:14.0px;line-height:22px;letter-spacing:0.368px;color:#fff;-webkit-text-stroke:0.60px;">Example Response</span>
<span class="t" style="left:15.70px;top:568.00px;font-size:12.36px;line-height:18px;letter-spacing:0.132px;color:#fff;">Body</span>
<div class="a" style="left:16px;top:591px;width:29px;height:2px;background:#f26b3a;"></div>
<span class="t" style="left:68.90px;top:568.00px;font-size:12.36px;line-height:18px;letter-spacing:0.112px;color:#a6a6a6;">Headers (0)</span>
<div class="a" style="left:16px;top:609px;width:790px;height:170px;background:#262626;"></div>
<span class="t" style="left:358.00px;top:674.00px;font-size:12.0px;line-height:18px;letter-spacing:0.475px;color:#c2c2c2;-webkit-text-stroke:0.52px;">No response body</span>
<span class="t" style="left:279.10px;top:697.00px;font-size:12.36px;line-height:18px;letter-spacing:0.200px;color:#a6a6a6;">This request doesn't return any response body</span>
</aside>
</body>
</html>
